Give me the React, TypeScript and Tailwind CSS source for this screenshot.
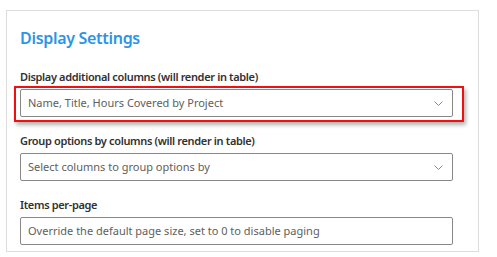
import React from "react";

function Chevron() {
  return (
    <svg width="9" height="5" viewBox="0 0 9 5" className="shrink-0">
      <path d="M0.5 0.5 L4.5 4.5 L8.5 0.5" fill="none" stroke="#8a8886" strokeWidth="1" />
    </svg>
  );
}

function Field({ label, text, chevron, children }: { label: string; text: string; chevron?: boolean; children?: React.ReactNode }) {
  return (
    <div className="relative flex flex-col">
      <div className="h-[20px] text-[11px] leading-[20px] font-semibold tracking-[-0.35px] text-[#323130]">{label}</div>
      <div className="mt-[2px] flex h-[28px] w-[433px] items-center justify-between rounded-[2px] border border-[#8a8886] pl-[7px] pr-[9px]">
        <span className="text-[11px] leading-[16px] text-[#605e5c]">{text}</span>
        {chevron && <Chevron />}
      </div>
      {children}
    </div>
  );
}

export default function App() {
  return (
    <div className="h-[257px] w-[497px] bg-white pl-[6px] pt-[10px]" style={{ fontFamily: '"Noto Sans", "Open Sans", sans-serif' }}>
      <div className="flex h-[242px] w-[473px] flex-col border border-[#dddddd] pl-[13px] pt-[16px]">
        <div className="h-[22px] text-[16px] leading-[22px] font-semibold tracking-[-0.3px] text-[#2b94e6]">Display Settings</div>
        <div className="mt-[18px]">
          <Field label="Display additional columns (will render in table)" text="Name, Title, Hours Covered by Project" chevron>
            <div className="pointer-events-none absolute left-[-6px] top-[19px] h-[36px] w-[450px] border-2 border-[#ee1111] shadow-[2px_3px_4px_rgba(0,0,0,0.3)]" />
          </Field>
        </div>
        <div className="mt-[14px]">
          <Field label="Group options by columns (will render in table)" text="Select columns to group options by" chevron />
        </div>
        <div className="mt-[14px]">
          <Field label="Items per-page" text="Override the default page size, set to 0 to disable paging" />
        </div>
      </div>
    </div>
  );
}
